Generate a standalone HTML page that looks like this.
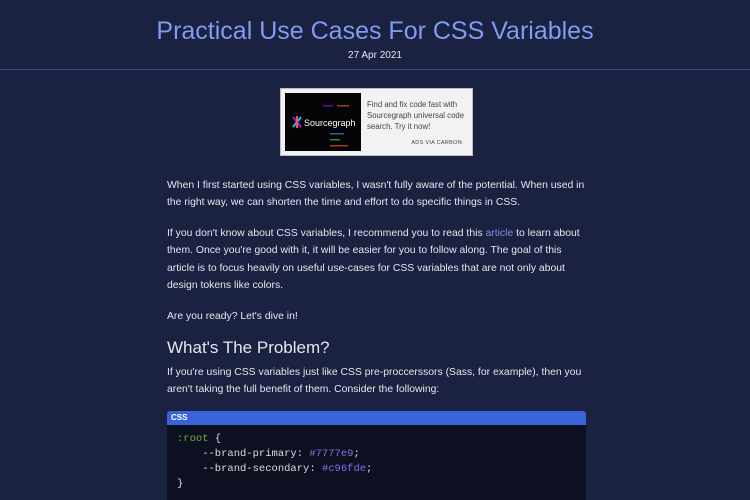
<!DOCTYPE html>
<html><head><style>
html,body{margin:0;width:750px;height:500px;overflow:hidden;background:#1b2140}
body{font-family:"Liberation Sans",sans-serif;color:#e4e6ee;position:relative}
.a{position:absolute;white-space:nowrap}
h1{position:absolute;top:17px;left:0;width:750px;text-align:center;margin:0;font-weight:normal;font-size:25px;color:#7f9cf0}
.date{top:50px;left:0;width:750px;text-align:center;font-size:10px}
.hr{position:absolute;top:69px;left:0;width:750px;height:1px;background:#3d4d8a}
.ad{position:absolute;left:280px;top:88px;width:193px;height:68px;background:#f2f2f2;border:1px solid #bbb;box-sizing:border-box}
.ad .img{position:absolute;left:4px;top:4px;width:76px;height:58px;background:#050508}
.ad .t{position:absolute;left:86px;top:10px;font-size:7.8px;line-height:11px;color:#444}
.ad .c{position:absolute;right:10px;top:51px;font-size:5.5px;color:#444;letter-spacing:.3px}
.txt{font-size:10.4px;line-height:17.4px;left:167px}
.link{color:#7f8ff0}
h2{position:absolute;left:167px;top:338px;margin:0;font-weight:normal;font-size:17px}
.code{position:absolute;left:167px;top:411px;width:419px;height:100px;background:#0d1020;border-radius:3px;overflow:hidden}
.code .h{height:14px;background:#3b63d9;color:#fff;font-size:8px;font-weight:bold;line-height:14px;padding-left:4px}
.code pre{margin:0;padding:7px 10px;font-family:"Liberation Mono",monospace;font-size:10.5px;line-height:15px;color:#ddd}
.g{color:#7ab03a}.p{color:#8a6ee8}
</style></head><body>
<h1>Practical Use Cases For CSS Variables</h1>
<div class="a date">27 Apr 2021</div>
<div class="hr"></div>
<div class="ad"><div class="img">
<svg width="76" height="58"><g stroke-width="2"><line x1="8" y1="24" x2="16" y2="34" stroke="#a112ff"/><line x1="16" y1="24" x2="8" y2="34" stroke="#00cbec"/><line x1="12" y1="23" x2="12" y2="35" stroke="#ff5543"/></g>
<text x="19" y="33" fill="#fff" font-size="9" font-family="Liberation Sans">Sourcegraph</text>
<g opacity=".6"><rect x="38" y="12" width="10" height="1.5" fill="#a1f"/><rect x="52" y="12" width="12" height="1.5" fill="#f63"/><rect x="45" y="40" width="14" height="1.5" fill="#3af"/><rect x="45" y="46" width="10" height="1.5" fill="#7c5"/><rect x="45" y="52" width="18" height="1.5" fill="#f63"/></g></svg>
</div><div class="t">Find and fix code fast with<br>Sourcegraph universal code<br>search. Try it now!</div><div class="c">ADS VIA CARBON</div></div>
<div class="a txt" style="top:177px">When I first started using CSS variables, I wasn't fully aware of the potential. When used in<br>the right way, we can shorten the time and effort to do specific things in CSS.</div>
<div class="a txt" style="top:225px">If you don't know about CSS variables, I recommend you to read this <span class="link">article</span> to learn about<br>them. Once you're good with it, it will be easier for you to follow along. The goal of this<br>article is to focus heavily on useful use-cases for CSS variables that are not only about<br>design tokens like colors.</div>
<div class="a txt" style="top:308px">Are you ready? Let's dive in!</div>
<h2>What's The Problem?</h2>
<div class="a txt" style="top:364px">If you're using CSS variables just like CSS pre-proccerssors (Sass, for example), then you<br>aren't taking the full benefit of them. Consider the following:</div>
<div class="code"><div class="h">CSS</div><pre><span class="g">:root</span> {
    --brand-primary: <span class="p">#7777e9</span>;
    --brand-secondary: <span class="p">#c96fde</span>;
}</pre></div>
</body></html>
